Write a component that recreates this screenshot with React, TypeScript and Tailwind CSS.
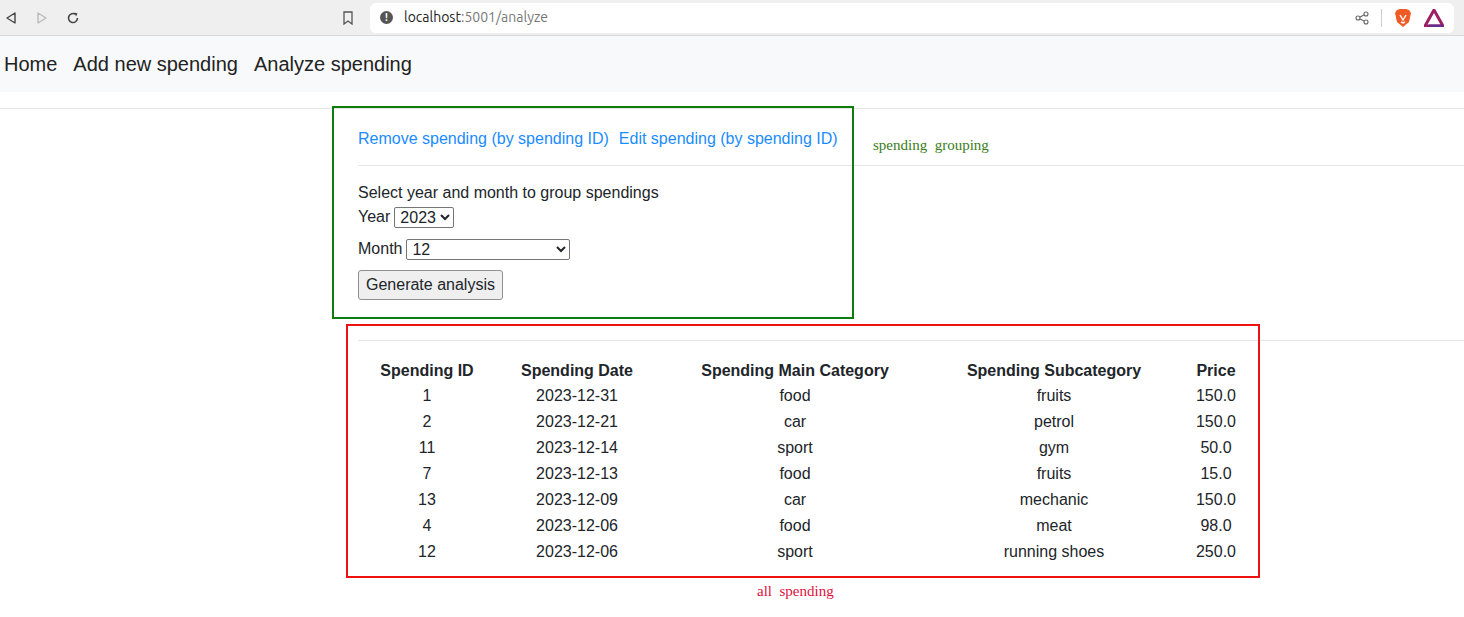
import React from "react";

const rows = [
  ["1", "2023-12-31", "food", "fruits", "150.0"],
  ["2", "2023-12-21", "car", "petrol", "150.0"],
  ["11", "2023-12-14", "sport", "gym", "50.0"],
  ["7", "2023-12-13", "food", "fruits", "15.0"],
  ["13", "2023-12-09", "car", "mechanic", "150.0"],
  ["4", "2023-12-06", "food", "meat", "98.0"],
  ["12", "2023-12-06", "sport", "running shoes", "250.0"],
];
const widths = ["w-[118px]", "w-[182px]", "w-[254px]", "w-[264px]", "w-[60px]"];

export default function App() {
  return (
    <div className="relative w-[1464px] h-[617px] bg-white overflow-hidden text-[#212529]" style={{ fontFamily: '"Liberation Sans", Arial, sans-serif' }}>
      {/* browser chrome */}
      <div className="h-[36px] bg-[#efefef] border-b border-[#d8d8d8] flex items-center">
        <div className="flex items-center gap-[17px] pl-[4px] text-[#555]">
          <svg width="14" height="14" viewBox="0 0 14 14"><path d="M11 2 L3 7 L11 12 Z" fill="none" stroke="#444" strokeWidth="1.4" strokeLinejoin="round"/></svg>
          <svg width="14" height="14" viewBox="0 0 14 14"><path d="M3 2 L11 7 L3 12 Z" fill="none" stroke="#bbb" strokeWidth="1.4" strokeLinejoin="round"/></svg>
          <svg width="14" height="14" viewBox="0 0 14 14"><path d="M11.5 7 A4.5 4.5 0 1 1 9.5 3.3" fill="none" stroke="#444" strokeWidth="1.6"/><path d="M8.5 1.5 L11.5 2.5 L10 5.5 Z" fill="#444"/></svg>
        </div>
        <svg className="ml-[262px]" width="12" height="14" viewBox="0 0 12 14"><path d="M2 1 H10 V13 L6 10 L2 13 Z" fill="none" stroke="#555" strokeWidth="1.3"/></svg>
        <div className="ml-[16px] w-[1084px] h-[30px] bg-white rounded-md flex items-center pl-[10px] text-[14px]" style={{ fontFamily: 'Ubuntu, "Noto Sans", sans-serif' }}>
          <span className="w-[13px] h-[13px] rounded-full bg-[#555] text-white text-[10px] font-bold flex items-center justify-center">!</span>
          <span className="ml-[11px] text-[#222]">localhost<span className="text-[#777]">:5001/analyze</span></span>
          <div className="ml-auto mr-[10px] flex items-center gap-[12px]">
            <svg width="14" height="14" viewBox="0 0 14 14" fill="none" stroke="#666" strokeWidth="1.1"><circle cx="3" cy="7" r="2"/><circle cx="11" cy="3" r="2"/><circle cx="11" cy="11" r="2"/><path d="M5 6 L9 4 M5 8 L9 10"/></svg>
            <span className="w-px h-[18px] bg-[#ccc]" />
            <svg width="18" height="20" viewBox="0 0 18 20"><path d="M3 2 L6 1 H12 L15 2 L17 5 L15 14 L9 19 L3 14 L1 5 Z" fill="#f05a24"/><path d="M6 7 L9 12 L12 7 M7 14 L9 15 L11 14" stroke="#fff" strokeWidth="1.4" fill="none"/></svg>
            <svg width="20" height="18" viewBox="0 0 20 18"><path d="M10 1 L19 17 H1 Z" fill="none" stroke="#9e1f63" strokeWidth="3" strokeLinejoin="round"/><path d="M5 17 H19" stroke="#662d91" strokeWidth="3"/></svg>
          </div>
        </div>
      </div>
      {/* navbar */}
      <nav className="h-[56px] bg-[#f8f9fa] flex items-center gap-[16px] pl-[4px] text-[20px] text-[#222]">
        <span>Home</span>
        <span>Add new spending</span>
        <span>Analyze spending</span>
      </nav>
      <div className="mt-[16px] border-t border-[#e5e5e5]" />
      <div className="pl-[358px] text-[16px]">
        <div className="flex gap-[10px] pt-[18px] h-[56px] text-[#1a8cff]">
          <span>Remove spending (by spending ID)</span>
          <span>Edit spending (by spending ID)</span>
        </div>
        <div className="border-t border-[#e5e5e5]" />
        <div className="pt-[18px] leading-[18px]">Select year and month to group spendings</div>
        <div className="flex items-center gap-[4px] mt-[5px] h-[20px]">
          <span>Year</span>
          <select className="border border-[#767676] rounded-[2px] text-[16px] h-[21px] px-[1px]" defaultValue="2023"><option>2023</option></select>
        </div>
        <div className="flex items-center gap-[4px] mt-[12px] h-[20px]">
          <span>Month</span>
          <select className="border border-[#767676] rounded-[2px] text-[16px] h-[21px] w-[164px] px-[1px]" defaultValue="12"><option>12</option></select>
        </div>
        <button className="mt-[11px] h-[30px] px-[7px] border border-[#8f8f8f] bg-[#efefef] rounded-[3px] text-[16px]">Generate analysis</button>
        <div className="mt-[40px] border-t border-[#e5e5e5]" />
        <table className="ml-[10px] mt-[18px] border-collapse text-[16px] text-center">
          <thead>
            <tr className="h-[22px]">
              {["Spending ID", "Spending Date", "Spending Main Category", "Spending Subcategory", "Price"].map((h, i) => (
                <th key={h} className={`${widths[i]} font-bold p-0`}>{h}</th>
              ))}
            </tr>
          </thead>
          <tbody>
            {rows.map((r) => (
              <tr key={r[0]} className="h-[26px]">
                {r.map((c, i) => <td key={i} className="p-0">{c}</td>)}
              </tr>
            ))}
          </tbody>
        </table>
      </div>
      {/* annotation overlays */}
      <div className="absolute left-[332px] top-[106px] w-[522px] h-[213px] border-2 border-[#107c10]" />
      <div className="absolute left-[873px] top-[134px] text-[15px] text-[#3a7d1a]" style={{ fontFamily: '"Liberation Serif", serif' }}>spending&nbsp; grouping</div>
      <div className="absolute left-[346px] top-[324px] w-[914px] h-[254px] border-2 border-[#ee1111]" />
      <div className="absolute left-[757px] top-[580px] text-[15px] text-[#e01040]" style={{ fontFamily: '"Liberation Serif", serif' }}>all&nbsp; spending</div>
    </div>
  );
}
